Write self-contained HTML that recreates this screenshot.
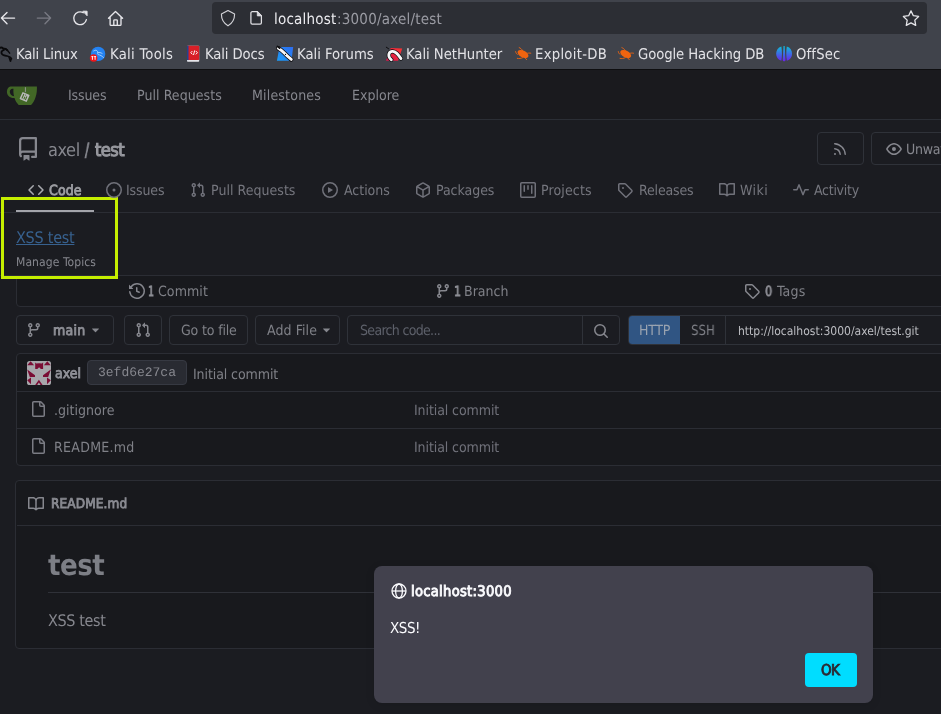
<!DOCTYPE html>
<html lang="en">
<head>
<meta charset="utf-8">
<title>axel/test - Gitea</title>
<style>
html,body{margin:0;padding:0;}
body{width:941px;height:714px;overflow:hidden;position:relative;background:#1b1c21;font-family:"DejaVu Sans Condensed","DejaVu Sans","Liberation Sans",sans-serif;font-stretch:condensed;}
.t{will-change:transform;text-rendering:geometricPrecision;font-weight:400;position:absolute;white-space:nowrap;margin:0;padding:0;line-height:normal;transform-origin:0 50%;display:block;text-decoration:none;}
.abs{position:absolute;}
svg{position:absolute;overflow:visible;}
#chrome{position:absolute;left:0;top:0;width:941px;height:69px;background:#40434b;}
#urlbar{position:absolute;left:212px;top:2px;width:715px;height:32px;border-radius:4px;background:#2c2e34;}
#nav{position:absolute;left:0;top:69px;width:941px;height:50px;background:#1a1a1e;border-bottom:1px solid #2b2e35;border-top:1px solid #0e0e10;box-sizing:border-box;height:51px;}
.btn{position:absolute;box-sizing:border-box;border:1px solid #2f3239;border-radius:4px;}
.line{position:absolute;background:#2b2d34;height:1px;}
.box{position:absolute;box-sizing:border-box;border:1px solid #2b2d34;background:#18191d;}
</style>
</head>
<body>
<!-- ======= Firefox chrome ======= -->
<div id="chrome">
  <div id="urlbar"></div>
  <!-- toolbar icons -->
  <svg id="tb-icons" style="left:0;top:0" width="941" height="37" viewBox="0 0 941 37" fill="none" stroke="#e6e6ea" stroke-width="1.35" stroke-linecap="round" stroke-linejoin="round">
    <path d="M14.6 18.1H2M7 12.5 1.4 18.1 7 23.7"/>
    <path d="M37.3 18.1h12.8M45 12.5l5.6 5.6-5.6 5.6" stroke="#787a83"/>
    <path d="M86.4 19.6a6.4 6.4 0 1 1-3.1-6.9"/>
    <path d="M83.2 11.2h3.9v4.2z" fill="#e6e6ea" stroke-width="0.9"/>
    <path d="M108.5 18.2 115.5 11.4 122.6 18.2M110.1 17v7.4a.9.9 0 0 0 .9.9h9.1a.9.9 0 0 0 .9-.9V17M113.8 25.2v-4.6a.8.8 0 0 1 .8-.8h1.9a.8.8 0 0 1 .8.8v4.6"/>
    <path d="M228 10.5l6.6 3.6c0 5.6-2.400 9.300-6.600 11.700-4.200-2.400-6.600-6.100-6.600-11.700z" stroke="#d2d2d7" stroke-width="1.15"/>
    <path d="M252.200 11.700h5.100l4.100 4.200v6.900a1.300 1.300 0 0 1-1.300 1.300h-7.900a1.300 1.300 0 0 1-1.300-1.300v-9.800a1.300 1.300 0 0 1 1.300-1.300z" stroke="#e0e0e4" stroke-width="1.25"/>
    <path d="M257.300 11.700v4.200h4.100z" fill="#d8d8dc" stroke="#e0e0e4" stroke-width="0.8"/>
    <path d="M911 10.900l2.350 4.770 5.260.76-3.800 3.710.9 5.240-4.710-2.470-4.710 2.470.9-5.240-3.800-3.710 5.260-.76z" stroke-width="1.3"/>
  </svg>


  <!-- bookmark favicons -->
  <svg id="favicons" style="left:0;top:37px" width="941" height="32" viewBox="0 37 941 32">
    <defs>
      <linearGradient id="og" x1="0" y1="0" x2="0" y2="1"><stop offset="0" stop-color="#10bcd6"/><stop offset="0.5" stop-color="#3b6ee6"/><stop offset="1" stop-color="#6a24ea"/></linearGradient>
    <linearGradient id="fg" x1="0" y1="1" x2="1" y2="0"><stop offset="0" stop-color="#1a9cf6"/><stop offset="1" stop-color="#2f6cf0"/></linearGradient><linearGradient id="ng" x1="0" y1="1" x2="1" y2="0"><stop offset="0" stop-color="#d4164e"/><stop offset="1" stop-color="#ff3330"/></linearGradient>
    </defs>
    <!-- Kali Linux dragon -->
    <g fill="none" stroke="#0a0a0c" stroke-linecap="round" stroke-linejoin="round">
      <path d="M0 47.700c1.400-.5 2.700-.2 3.200.9 1.600.1 3 .6 3.900 1.500" stroke-width="2"/>
      <path d="M6 48.800l3.700 4.400-2.300-3" stroke-width="1.300"/>
      <path d="M4 49.900c-2 .7-2.800 2.100-2.500 3.400.5 2.200 3.500 2.300 5.700 2.700 2.100.4 3.600 1.200 4.200 2.600" stroke-width="1.700"/>
      <path d="M9 57.300l1.300 4M11.300 58.500l-.6 2.500" stroke-width="1.300"/>
    </g>
    <!-- Kali Tools -->
    <circle cx="98.100" cy="53.900" r="7.200" fill="#2382f2"/>
    <path d="M93.700 50.900c1-.6 1.900-.8 2.700-.5 1 .4 1.300 1.400 1.400 2.300 1.500-.4 2.900-.1 4.300.7M97.800 52.700c-.3.900-.2 1.500.4 1.900 1.900.4 3.800 1.300 5.300 2.900" fill="none" stroke="#b9dafc" stroke-width="0.950" stroke-linecap="round" opacity="0.9"/>
    <circle cx="93.600" cy="58" r="3.800" fill="#f0161a"/>
    <path d="M91.400 56.600h2M92.400 56.600v3.200M94.100 56.600h2M95.100 56.600v3.200" stroke="#fff" stroke-width="0.950"/>
    <!-- Kali Docs -->
    <rect x="187" y="45.800" width="12.200" height="15.900" rx="0.800" fill="#e6e6ea"/>
    <rect x="187" y="45.800" width="12.200" height="14.300" rx="0.800" fill="#d81f27"/>
    <rect x="187" y="45.800" width="1.500" height="14.300" fill="#24408f"/>
    <path d="M192.400 51l-1.600 1.700 1.600 1.700M195.800 51l1.600 1.700-1.600 1.700M194.700 50.400l-1.200 4.600" fill="none" stroke="#fff" stroke-width="0.950"/>
    <!-- Kali Forums -->
    <path d="M279.500 46.900h13.700l-1.700 13.900h-14.600z" fill="url(#fg)"/>
    <path d="M278.300 48.200c2.200 1.200 4.200 2.900 6 4.800 1.900 2.100 4.300 4.300 7 6.400" fill="none" stroke="#0b0b0d" stroke-width="4.400" stroke-linecap="round"/>
    <path d="M278.300 48.200c2.200 1.200 4.200 2.900 6 4.800 1.900 2.100 4.300 4.300 7 6.400" fill="none" stroke="#f6f6f8" stroke-width="2.900" stroke-linecap="round"/>
    <path d="M277.400 46.300l2.200 1.900" stroke="#0b0b0d" stroke-width="1.600" stroke-linecap="round"/>
    <circle cx="285.500" cy="54.400" r="0.600" fill="#0b0b0d"/>
    <!-- Kali NetHunter -->
    <path d="M390.700 48l11.500.5-4.100 12.300h-12.100z" fill="url(#ng)"/>
    <path d="M386.300 47.200l2.300 1.600" stroke="#0b0b0d" stroke-width="1" stroke-linecap="round"/>
    <path d="M391.400 59.800c-3.600-2.600-3.600-7.700.6-8.400 3.600-.6 6.300 3.300 9 7.200" fill="none" stroke="#0b0b0d" stroke-width="4.200" stroke-linecap="round"/>
    <path d="M391.400 59.800c-3.600-2.600-3.600-7.700.6-8.400 3.600-.6 6.300 3.300 9 7.200" fill="none" stroke="#f6f6f8" stroke-width="2.800" stroke-linecap="round"/>
    <!-- Exploit-DB bug -->
    <g fill="#f0640f" stroke="#f0640f">
      <ellipse cx="523" cy="54.100" rx="5.900" ry="3.400" transform="rotate(28 523 54.100)" stroke="none"/>
      <path d="M519.200 47.600c1.400.6 2.600 1.600 3.400 3M526.500 53.500c1.600-.5 3-.6 4.300-.3M517.300 58.400c1.700.4 3.600.1 5.300-.7M515.600 51.600c.2 1.200.8 2.200 1.700 2.800M525 57.600c.5.900 1 1.600 1.600 2.100" fill="none" stroke-width="0.900" stroke-linecap="round"/>
    </g>
    <g transform="translate(102.7 0)" fill="#f0640f" stroke="#f0640f">
      <ellipse cx="523" cy="54.100" rx="5.900" ry="3.400" transform="rotate(28 523 54.100)" stroke="none"/>
      <path d="M519.200 47.600c1.400.6 2.600 1.600 3.400 3M526.500 53.500c1.600-.5 3-.6 4.300-.3M517.300 58.400c1.700.4 3.600.1 5.300-.7M515.600 51.600c.2 1.200.8 2.200 1.700 2.800M525 57.600c.5.900 1 1.600 1.600 2.100" fill="none" stroke-width="0.900" stroke-linecap="round"/>
    </g>
    <!-- OffSec -->
    <path d="M781.400 46.500c-7 2-7 12.300 0 14.300 .7-4.800 .7-9.500 0-14.300z" fill="url(#og)"/>
    <path d="M786.800 46.500c7 2 7 12.300 0 14.300-.7-4.800-.7-9.500 0-14.300z" fill="url(#og)"/>
    <path d="M783.500 46h1.200l.8 13.900c0 1.700-2.800 1.700-2.800 0z" fill="url(#og)"/>
  </svg>
</div>
<!-- ======= Gitea navbar ======= -->
<div id="nav">
  <svg id="logo" style="left:0;top:8.400px" width="50" height="34" viewBox="0 78 50 34">
    <path d="M10.400 86.600h26.500c.4 6.900-1.400 13.900-5.800 18.500h-12.400c-2.100-2.100-3.500-4.500-4.200-7-4.600.3-7.600-2.600-7.600-6.300 0-2.900 1.500-4.700 3.500-5.200zM11.900 88.700c-1.300.5-2.100 1.600-2.100 3.100 0 2.200 1.600 4.100 4.300 4.400-.7-2.800-.9-5.500-.6-7.500z" fill="#426726" fill-rule="evenodd"/>
    <path d="M25.400 87.200v5" stroke="#9b9c9c" stroke-width="0.900"/>
    <g transform="rotate(24 24.600 97)">
      <rect x="20.700" y="93.100" width="7.800" height="7.800" rx="0.700" fill="#b9b9ba"/>
      <path d="M22.700 94.600v4.800M24.800 96.600v2.800M26.500 95.500v3.900M24.800 94.500v.8" stroke="#436827" stroke-width="1.050"/>
    </g>
  </svg>
</div>

<!-- repo header buttons -->
<div class="btn" style="left:817px;top:132px;width:47px;height:33px;"></div>
<div class="btn" style="left:871px;top:132px;width:90px;height:33px;"></div>

<!-- tabs -->
<div class="line" style="left:0;top:212px;width:941px;"></div>
<div class="abs" style="left:16px;top:210px;width:78px;height:2px;background:#a3a4aa;"></div>

<!-- stats segment -->
<div class="box" style="left:16px;top:275px;width:960px;height:32px;border-radius:0 0 4px 4px;"></div>
<div class="line" style="left:0;top:275px;width:941px;"></div>

<!-- button row -->
<div class="btn" style="left:16px;top:315px;width:98px;height:30px;"></div>
<div class="btn" style="left:124px;top:315px;width:38px;height:30px;"></div>
<div class="btn" style="left:169px;top:315px;width:79px;height:30px;"></div>
<div class="btn" style="left:255px;top:315px;width:85px;height:30px;"></div>
<div class="btn" style="left:347px;top:315px;width:273px;height:30px;"></div>
<div class="abs" style="left:582px;top:316px;width:1px;height:28px;background:#2f3239;"></div>
<div class="btn" style="left:628px;top:315px;width:340px;height:30px;"></div>
<div class="abs" style="left:629px;top:316px;width:51px;height:28px;background:#305583;border-radius:3px 0 0 3px;"></div>
<div class="abs" style="left:725px;top:316px;width:1px;height:28px;background:#2f3239;"></div>

<!-- file table -->
<div class="box" style="left:16px;top:353px;width:960px;height:113px;border-radius:4px;"></div>
<div class="line" style="left:17px;top:391px;width:930px;"></div>
<div class="line" style="left:17px;top:428px;width:930px;"></div>
<svg id="avatar" style="left:27px;top:361px" width="24" height="24" viewBox="0 0 24 24">
  <rect width="24" height="24" rx="2.600" fill="#a7a7ab"/>
  <g fill="#7a0d34">
    <path d="M.2 4.300h6.900L3.600.3zM16.900 4.300h6.900L20.300.3z"/>
    <path d="M8.200 1.400l1.200 1.200 2.700-.4 2.800.4 1.200-1.200v6.700h-2.200l-1.800-1.900-1.800 1.900H8.200z"/>
    <path d="M.2 8.400l7.800 5.800v1.800H2.800zM23.800 8.400l-7.800 5.800v1.800h5.200z"/>
    <path d="M.2 19.300L4 16.600v6.700zM23.800 19.300L20 16.600v6.700z"/>
    <path d="M11.900 18.800l3.700 5.100h-2l-1.700-2.300-1.700 2.300h-2z"/>
  </g>
</svg>
<div class="abs" style="left:87px;top:360px;width:100px;height:25px;border-radius:4px;background:#292b32;border:1px solid #363942;box-sizing:border-box;"></div>

<!-- readme -->
<div class="box" style="left:15px;top:480px;width:961px;height:169px;border-radius:4px;"></div>
<div class="line" style="left:17px;top:525px;width:930px;"></div>
<div class="line" style="left:48px;top:592px;width:900px;background:#2f3138;"></div>

<!-- highlight -->
<div class="abs" style="left:1px;top:197px;width:117px;height:82px;box-sizing:border-box;border:3px solid #c5ee00;"></div>

<!-- alert dialog -->
<div class="abs" style="left:374px;top:566px;width:499px;height:137px;border-radius:8px;background:#42414d;box-shadow:0 2px 10px rgba(0,0,0,.1);"></div>
<div class="abs" style="left:805px;top:653px;width:52px;height:34px;border-radius:4px;background:#00ddff;"></div>

<svg id="globe" style="left:390.700px;top:582.800px" width="16" height="16" viewBox="0 0 16 16" fill="none" stroke="#fbfbfe" stroke-width="1.300">
  <circle cx="8" cy="8" r="7"/><ellipse cx="8" cy="8" rx="3.400" ry="7"/><path d="M1 8h14"/>
</svg>
<svg class="oct" style="left:16.4px;top:137px" width="24" height="24" viewBox="0 0 16 16" fill="#86878e"><path d="M2 2.5A2.5 2.5 0 0 1 4.5 0h8.75a.75.75 0 0 1 .75.75v12.5a.75.75 0 0 1-.75.75h-2.5a.75.75 0 0 1 0-1.5h1.75v-2h-8a1 1 0 0 0-.714 1.7.75.75 0 1 1-1.072 1.05A2.495 2.495 0 0 1 2 11.5Zm10.500-1h-8a1 1 0 0 0-1 1v6.708A2.486 2.486 0 0 1 4.500 9h8ZM5 12.250a.25.25 0 0 1 .25-.25h3.500a.25.25 0 0 1 .25.25v3.250a.25.25 0 0 1-.4.2l-1.450-1.087a.249.249 0 0 0-.3 0L5.400 15.700a.25.25 0 0 1-.4-.2Z"/></svg>
<svg class="oct" style="left:831.7px;top:141px" width="16" height="16" viewBox="0 0 16 16" fill="#86878e"><path d="M2.002 2.725a.75.75 0 0 1 .797-.699C8.790 2.420 13.580 7.210 13.974 13.201a.75.75 0 0 1-1.497.098 10.502 10.502 0 0 0-9.776-9.776.747.747 0 0 1-.7-.798ZM2.840 7.050h-.002a7.002 7.002 0 0 1 6.113 6.111.75.75 0 0 1-1.490.178 5.503 5.503 0 0 0-4.800-4.800.75.75 0 0 1 .179-1.489ZM2 13a1 1 0 1 1 2 0 1 1 0 0 1-2 0Z"/></svg>
<svg class="oct" style="left:886px;top:141.3px" width="16" height="16" viewBox="0 0 16 16" fill="#86878e"><path d="M8 2c1.981 0 3.671.992 4.933 2.078 1.270 1.091 2.187 2.345 2.637 3.023a1.620 1.620 0 0 1 0 1.798c-.45.678-1.367 1.932-2.637 3.023C11.670 13.008 9.981 14 8 14c-1.981 0-3.671-.992-4.933-2.078C1.797 10.830.880 9.576.430 8.898a1.620 1.620 0 0 1 0-1.798c.45-.677 1.367-1.931 2.637-3.022C4.330 2.992 6.019 2 8 2ZM1.679 7.932a.12.12 0 0 0 0 .136c.411.622 1.241 1.750 2.366 2.717C5.176 11.758 6.527 12.500 8 12.500c1.473 0 2.825-.742 3.955-1.715 1.124-.967 1.954-2.096 2.366-2.717a.12.12 0 0 0 0-.136c-.412-.621-1.242-1.750-2.366-2.717C10.824 4.242 9.473 3.500 8 3.500c-1.473 0-2.825.742-3.955 1.715-1.124.967-1.954 2.096-2.366 2.717ZM8 10a2 2 0 1 1-.001-3.999A2 2 0 0 1 8 10Z"/></svg>
<svg class="oct" style="left:28px;top:182.4px" width="16" height="16" viewBox="0 0 16 16" fill="#a8a9ae"><path d="m11.28 3.22 4.25 4.25a.75.75 0 0 1 0 1.06l-4.25 4.25a.749.749 0 0 1-1.275-.326.749.749 0 0 1 .215-.734L13.94 8l-3.72-3.72a.749.749 0 0 1 .326-1.275.749.749 0 0 1 .734.215Zm-6.56 0a.751.751 0 0 1 1.042.018.751.751 0 0 1 .018 1.042L2.06 8l3.72 3.72a.749.749 0 0 1-.326 1.275.749.749 0 0 1-.734-.215L.47 8.53a.75.75 0 0 1 0-1.06Z"/></svg>
<svg class="oct" style="left:106px;top:182.3px" width="16" height="16" viewBox="0 0 16 16" fill="#70717a"><path d="M8 9.5a1.5 1.5 0 1 0 0-3 1.5 1.5 0 0 0 0 3Z M8 0a8 8 0 1 1 0 16A8 8 0 0 1 8 0ZM1.5 8a6.5 6.5 0 1 0 13 0 6.5 6.5 0 0 0-13 0Z"/></svg>
<svg class="oct" style="left:189.5px;top:182.3px" width="16" height="16" viewBox="0 0 16 16" fill="#70717a"><path d="M1.5 3.25a2.25 2.25 0 1 1 3 2.122v5.256a2.251 2.251 0 1 1-1.5 0V5.372A2.25 2.25 0 0 1 1.5 3.25Zm5.677-.177L9.573.677A.25.25 0 0 1 10 .854V2.5h1A2.5 2.5 0 0 1 13.5 5v5.628a2.251 2.251 0 1 1-1.5 0V5a1 1 0 0 0-1-1h-1v1.646a.25.25 0 0 1-.427.177L7.177 3.427a.25.25 0 0 1 0-.354ZM3.75 2.5a.75.75 0 1 0 0 1.5.75.75 0 0 0 0-1.5Zm0 9.5a.75.75 0 1 0 0 1.5.75.75 0 0 0 0-1.5Zm8.25.75a.75.75 0 1 0 1.5 0 .75.75 0 0 0-1.5 0Z"/></svg>
<svg class="oct" style="left:322px;top:182.3px" width="16" height="16" viewBox="0 0 16 16" fill="#70717a"><path d="M8 0a8 8 0 1 1 0 16A8 8 0 0 1 8 0ZM1.5 8a6.5 6.5 0 1 0 13 0 6.5 6.5 0 0 0-13 0Zm4.879-2.773 4.264 2.559a.25.25 0 0 1 0 .428l-4.264 2.559A.25.25 0 0 1 6 10.559V5.442a.25.25 0 0 1 .379-.215Z"/></svg>
<svg class="oct" style="left:414.75px;top:182.3px" width="16" height="16" viewBox="0 0 16 16" fill="#70717a"><path d="m8.878.392 5.25 3.045c.54.314.872.89.872 1.514v6.098a1.75 1.75 0 0 1-.872 1.514l-5.25 3.045a1.75 1.75 0 0 1-1.756 0l-5.25-3.045A1.75 1.75 0 0 1 1 11.049V4.951c0-.624.332-1.201.872-1.514L7.122.392a1.75 1.75 0 0 1 1.756 0ZM7.875 1.69l-4.63 2.685L8 7.133l4.755-2.758-4.63-2.685a.248.248 0 0 0-.25 0ZM2.5 5.677v5.372c0 .09.047.171.125.216l4.625 2.683V8.432Zm6.25 8.271 4.625-2.683a.25.25 0 0 0 .125-.216V5.677L8.75 8.432Z"/></svg>
<svg class="oct" style="left:520px;top:182.3px" width="16" height="16" viewBox="0 0 16 16" fill="#70717a"><path d="M1.75 0h12.5C15.216 0 16 .784 16 1.75v12.5A1.75 1.75 0 0 1 14.25 16H1.75A1.75 1.75 0 0 1 0 14.25V1.75C0 .784.784 0 1.75 0ZM1.5 1.75v12.5c0 .138.112.25.25.25h12.5a.25.25 0 0 0 .25-.25V1.75a.25.25 0 0 0-.25-.25H1.75a.25.25 0 0 0-.25.25ZM11.75 3a.75.75 0 0 1 .75.75v7.5a.75.75 0 0 1-1.5 0v-7.5a.75.75 0 0 1 .75-.75Zm-8.25.75a.75.75 0 0 1 1.5 0v5.5a.75.75 0 0 1-1.5 0ZM8 3a.75.75 0 0 1 .75.75v3.5a.75.75 0 0 1-1.5 0v-3.5A.75.75 0 0 1 8 3Z"/></svg>
<svg class="oct" style="left:617px;top:182.3px" width="16" height="16" viewBox="0 0 16 16" fill="#70717a"><path d="M1 7.775V2.75C1 1.784 1.784 1 2.75 1h5.025c.464 0 .91.184 1.238.513l6.25 6.25a1.75 1.75 0 0 1 0 2.474l-5.026 5.026a1.75 1.75 0 0 1-2.474 0l-6.25-6.25A1.752 1.752 0 0 1 1 7.775Zm1.5 0c0 .066.026.13.073.177l6.25 6.25a.25.25 0 0 0 .354 0l5.025-5.025a.25.25 0 0 0 0-.354l-6.25-6.25a.25.25 0 0 0-.177-.073H2.75a.25.25 0 0 0-.25.25ZM6 5a1 1 0 1 1 0 2 1 1 0 0 1 0-2Z"/></svg>
<svg class="oct" style="left:718.8px;top:182.3px" width="16" height="16" viewBox="0 0 16 16" fill="#70717a"><path d="M0 1.75A.75.75 0 0 1 .75 1h4.253c1.227 0 2.317.59 3 1.501A3.743 3.743 0 0 1 11.006 1h4.245a.75.75 0 0 1 .75.75v10.5a.75.75 0 0 1-.75.75h-4.507a2.25 2.25 0 0 0-1.591.659l-.622.621a.75.75 0 0 1-1.06 0l-.622-.621A2.25 2.25 0 0 0 5.258 13H.75a.75.75 0 0 1-.75-.75Zm7.251 10.324.004-5.073-.002-2.253A2.25 2.25 0 0 0 5.003 2.5H1.5v9h3.757a3.75 3.75 0 0 1 1.994.574ZM8.755 4.75l-.004 7.322a3.752 3.752 0 0 1 1.992-.572H14.5v-9h-3.495a2.25 2.25 0 0 0-2.25 2.25Z"/></svg>
<svg class="oct" style="left:792.8px;top:182.3px" width="16" height="16" viewBox="0 0 16 16" fill="#70717a"><path d="M6 2c.306 0 .582.187.696.471L10 10.731l1.304-3.26A.751.751 0 0 1 12 7h3.25a.75.75 0 0 1 0 1.5h-2.742l-1.812 4.528a.751.751 0 0 1-1.392 0L6 4.77 4.696 8.03A.75.75 0 0 1 4 8.5H.75a.75.75 0 0 1 0-1.5h2.742l1.812-4.529A.751.751 0 0 1 6 2Z"/></svg>
<svg class="oct" style="left:129px;top:283.2px" width="16" height="16" viewBox="0 0 16 16" fill="#86878e"><path d="m.427 1.927 1.215 1.215a8.002 8.002 0 1 1-1.600 5.685.75.75 0 1 1 1.493-.154 6.500 6.500 0 1 0 1.180-4.458l1.358 1.358A.25.25 0 0 1 3.896 6H.25A.25.25 0 0 1 0 5.750V2.104a.25.25 0 0 1 .427-.177ZM7.750 4a.75.75 0 0 1 .75.75v2.992l2.028.812a.75.75 0 0 1-.557 1.392l-2.500-1A.751.751 0 0 1 7 8.250v-3.500A.75.75 0 0 1 7.750 4Z"/></svg>
<svg class="oct" style="left:435px;top:283.2px" width="16" height="16" viewBox="0 0 16 16" fill="#86878e"><path d="M9.500 3.250a2.250 2.250 0 1 1 3 2.122V6A2.500 2.500 0 0 1 10 8.500H6a1 1 0 0 0-1 1v1.128a2.251 2.251 0 1 1-1.500 0V5.372a2.250 2.250 0 1 1 1.500 0v1.836A2.493 2.493 0 0 1 6 7h4a1 1 0 0 0 1-1v-.628A2.250 2.250 0 0 1 9.500 3.250Zm-6 0a.75.75 0 1 0 1.500 0 .75.75 0 0 0-1.500 0Zm8.250-.75a.75.75 0 1 0 0 1.500.75.75 0 0 0 0-1.500ZM4.250 12a.75.75 0 1 0 0 1.500.75.75 0 0 0 0-1.500Z"/></svg>
<svg class="oct" style="left:743.6px;top:283.2px" width="16" height="16" viewBox="0 0 16 16" fill="#86878e"><path d="M1 7.775V2.75C1 1.784 1.784 1 2.75 1h5.025c.464 0 .91.184 1.238.513l6.25 6.25a1.75 1.75 0 0 1 0 2.474l-5.026 5.026a1.75 1.75 0 0 1-2.474 0l-6.25-6.25A1.752 1.752 0 0 1 1 7.775Zm1.5 0c0 .066.026.13.073.177l6.25 6.25a.25.25 0 0 0 .354 0l5.025-5.025a.25.25 0 0 0 0-.354l-6.25-6.25a.25.25 0 0 0-.177-.073H2.75a.25.25 0 0 0-.25.25ZM6 5a1 1 0 1 1 0 2 1 1 0 0 1 0-2Z"/></svg>
<svg class="oct" style="left:26px;top:322px" width="16" height="16" viewBox="0 0 16 16" fill="#86878e"><path d="M9.500 3.250a2.250 2.250 0 1 1 3 2.122V6A2.500 2.500 0 0 1 10 8.500H6a1 1 0 0 0-1 1v1.128a2.251 2.251 0 1 1-1.500 0V5.372a2.250 2.250 0 1 1 1.500 0v1.836A2.493 2.493 0 0 1 6 7h4a1 1 0 0 0 1-1v-.628A2.250 2.250 0 0 1 9.500 3.250Zm-6 0a.75.75 0 1 0 1.500 0 .75.75 0 0 0-1.500 0Zm8.250-.75a.75.75 0 1 0 0 1.500.75.75 0 0 0 0-1.500ZM4.250 12a.75.75 0 1 0 0 1.500.75.75 0 0 0 0-1.500Z"/></svg>
<svg class="oct" style="left:88.4px;top:322.2px" width="15" height="15" viewBox="0 0 16 16" fill="#86878e"><path d="m4.427 7.427 3.396 3.396a.25.25 0 0 0 .354 0l3.396-3.396A.25.25 0 0 0 11.396 7H4.604a.25.25 0 0 0-.177.427Z"/></svg>
<svg class="oct" style="left:134.5px;top:322px" width="16" height="16" viewBox="0 0 16 16" fill="#86878e"><path d="M1.5 3.25a2.25 2.25 0 1 1 3 2.122v5.256a2.251 2.251 0 1 1-1.5 0V5.372A2.25 2.25 0 0 1 1.5 3.25Zm5.677-.177L9.573.677A.25.25 0 0 1 10 .854V2.5h1A2.5 2.5 0 0 1 13.5 5v5.628a2.251 2.251 0 1 1-1.5 0V5a1 1 0 0 0-1-1h-1v1.646a.25.25 0 0 1-.427.177L7.177 3.427a.25.25 0 0 1 0-.354ZM3.75 2.5a.75.75 0 1 0 0 1.5.75.75 0 0 0 0-1.5Zm0 9.5a.75.75 0 1 0 0 1.5.75.75 0 0 0 0-1.5Zm8.25.75a.75.75 0 1 0 1.5 0 .75.75 0 0 0-1.5 0Z"/></svg>
<svg class="oct" style="left:318.9px;top:322.2px" width="15" height="15" viewBox="0 0 16 16" fill="#86878e"><path d="m4.427 7.427 3.396 3.396a.25.25 0 0 0 .354 0l3.396-3.396A.25.25 0 0 0 11.396 7H4.604a.25.25 0 0 0-.177.427Z"/></svg>
<svg class="oct" style="left:593.25px;top:322.5px" width="16" height="16" viewBox="0 0 16 16" fill="#86878e"><path d="M10.680 11.740a6 6 0 0 1-7.922-8.982 6 6 0 0 1 8.982 7.922l3.040 3.040a.749.749 0 0 1-.326 1.275.749.749 0 0 1-.734-.215ZM11.500 7a4.499 4.499 0 1 0-8.997 0A4.499 4.499 0 0 0 11.500 7Z"/></svg>
<svg class="oct" style="left:30px;top:401px" width="16" height="16" viewBox="0 0 16 16" fill="#7b7c84"><path d="M2 1.750C2 .784 2.784 0 3.750 0h6.586c.464 0 .909.184 1.237.513l2.914 2.914c.329.328.513.773.513 1.237v9.586A1.750 1.750 0 0 1 13.250 16h-9.500A1.750 1.750 0 0 1 2 14.250Zm1.750-.25a.25.25 0 0 0-.25.25v12.500c0 .138.112.25.25.25h9.500a.25.25 0 0 0 .25-.25V6h-2.750A1.750 1.750 0 0 1 9 4.250V1.500Zm6.750.062V4.250c0 .138.112.25.25.25h2.688l-.011-.013-2.914-2.914-.013-.011Z"/></svg>
<svg class="oct" style="left:30px;top:438px" width="16" height="16" viewBox="0 0 16 16" fill="#7b7c84"><path d="M2 1.750C2 .784 2.784 0 3.750 0h6.586c.464 0 .909.184 1.237.513l2.914 2.914c.329.328.513.773.513 1.237v9.586A1.750 1.750 0 0 1 13.250 16h-9.500A1.750 1.750 0 0 1 2 14.250Zm1.750-.25a.25.25 0 0 0-.25.25v12.500c0 .138.112.25.25.25h9.500a.25.25 0 0 0 .25-.25V6h-2.750A1.750 1.750 0 0 1 9 4.250V1.500Zm6.750.062V4.250c0 .138.112.25.25.25h2.688l-.011-.013-2.914-2.914-.013-.011Z"/></svg>
<svg class="oct" style="left:28px;top:495.5px" width="16" height="16" viewBox="0 0 16 16" fill="#86878e"><path d="M0 1.75A.75.75 0 0 1 .75 1h4.253c1.227 0 2.317.59 3 1.501A3.743 3.743 0 0 1 11.006 1h4.245a.75.75 0 0 1 .75.75v10.5a.75.75 0 0 1-.75.75h-4.507a2.25 2.25 0 0 0-1.591.659l-.622.621a.75.75 0 0 1-1.06 0l-.622-.621A2.25 2.25 0 0 0 5.258 13H.75a.75.75 0 0 1-.75-.75Zm7.251 10.324.004-5.073-.002-2.253A2.25 2.25 0 0 0 5.003 2.5H1.5v9h3.757a3.75 3.75 0 0 1 1.994.574ZM8.755 4.75l-.004 7.322a3.752 3.752 0 0 1 1.992-.572H14.5v-9h-3.495a2.25 2.25 0 0 0-2.25 2.25Z"/></svg>
<span class="t" id="t0" style="left:273.9px;top:10.25px;font-size:15px;color:#ececf0;letter-spacing:0.229px;">localhost</span>
<span class="t" id="t1" style="left:336.8px;top:10.25px;font-size:15px;color:#9a9ba3;letter-spacing:0.214px;">:3000/axel/test</span>
<span class="t" id="t2" style="left:15.5px;top:46.25px;font-size:14.7px;color:#e2e2e6;letter-spacing:-0.203px;">Kali Linux</span>
<span class="t" id="t3" style="left:109.5px;top:46.25px;font-size:14.7px;color:#e2e2e6;letter-spacing:0.284px;">Kali Tools</span>
<span class="t" id="t4" style="left:204.5px;top:46.25px;font-size:14.7px;color:#e2e2e6;letter-spacing:-0.102px;">Kali Docs</span>
<span class="t" id="t5" style="left:296.5px;top:46.25px;font-size:14.7px;color:#e2e2e6;letter-spacing:-0.013px;">Kali Forums</span>
<span class="t" id="t6" style="left:405.75px;top:46.25px;font-size:14.7px;color:#e2e2e6;letter-spacing:-0.037px;">Kali NetHunter</span>
<span class="t" id="t7" style="left:534.87px;top:46.25px;font-size:14.7px;color:#e2e2e6;letter-spacing:0.284px;">Exploit-DB</span>
<span class="t" id="t8" style="left:638.08px;top:46.25px;font-size:14.7px;color:#e2e2e6;letter-spacing:-0.082px;">Google Hacking DB</span>
<span class="t" id="t9" style="left:796.08px;top:46.25px;font-size:14.7px;color:#e2e2e6;letter-spacing:0.151px;">OffSec</span>
<span class="t" id="t10" style="left:67.84px;top:88px;font-size:14px;color:#86878e;letter-spacing:-0.116px;">Issues</span>
<span class="t" id="t11" style="left:137.26px;top:88px;font-size:14px;color:#86878e;letter-spacing:0.067px;">Pull Requests</span>
<span class="t" id="t12" style="left:252.25px;top:88px;font-size:14px;color:#86878e;letter-spacing:0.188px;">Milestones</span>
<span class="t" id="t13" style="left:352.02px;top:88px;font-size:14px;color:#86878e;letter-spacing:0.004px;">Explore</span>
<span class="t" id="t14" style="left:48.2px;top:139.8px;font-size:18px;color:#86878e;letter-spacing:-0.424px;">axel</span>
<span class="t" id="t15" style="left:85.24px;top:139.8px;font-size:18px;color:#86878e;-webkit-text-stroke:1.04px #86878e;transform:scaleX(0.7381);">/</span>
<span class="t" id="t16" style="left:94.79px;top:139.8px;font-size:18px;color:#97989e;-webkit-text-stroke:1.04px #97989e;letter-spacing:-0.507px;">test</span>
<span class="t" id="t17" style="left:905.87px;top:142.3px;font-size:14px;color:#86878e;letter-spacing:-0.231px;">Unwatch</span>
<span class="t" id="t18" style="left:48.7px;top:183px;font-size:14px;color:#9d9ea3;-webkit-text-stroke:0.81px #9d9ea3;letter-spacing:0.1px;">Code</span>
<span class="t" id="t19" style="left:126.26px;top:183px;font-size:14px;color:#75767e;letter-spacing:-0.116px;">Issues</span>
<span class="t" id="t20" style="left:210.84px;top:183px;font-size:14px;color:#75767e;letter-spacing:0.034px;">Pull Requests</span>
<span class="t" id="t21" style="left:343.81px;top:183px;font-size:14px;color:#75767e;letter-spacing:-0.026px;">Actions</span>
<span class="t" id="t22" style="left:435.87px;top:183px;font-size:14px;color:#75767e;letter-spacing:-0.036px;">Packages</span>
<span class="t" id="t23" style="left:540.84px;top:183px;font-size:14px;color:#75767e;letter-spacing:0.138px;">Projects</span>
<span class="t" id="t24" style="left:638.61px;top:183px;font-size:14px;color:#75767e;letter-spacing:-0.154px;">Releases</span>
<span class="t" id="t25" style="left:740.01px;top:183px;font-size:14px;color:#75767e;letter-spacing:0.401px;">Wiki</span>
<span class="t" id="t26" style="left:814.24px;top:183px;font-size:14px;color:#75767e;letter-spacing:-0.281px;">Activity</span>
<a class="t" id="t27" style="left:15.7px;top:227.5px;font-size:16px;color:#37618f;letter-spacing:-0.244px;text-decoration:underline;text-underline-offset:1px;">XSS test</a>
<span class="t" id="t28" style="left:15.65px;top:255px;font-size:12px;color:#86878e;letter-spacing:0.089px;">Manage Topics</span>
<span class="t" id="t29" style="left:148.3px;top:284.25px;font-size:14px;color:#8e8f96;-webkit-text-stroke:0.81px #8e8f96;transform:scaleX(0.7627);">1</span>
<span class="t" id="t30" style="left:158.33px;top:284.25px;font-size:14px;color:#7f8087;letter-spacing:0.072px;">Commit</span>
<span class="t" id="t31" style="left:454.35px;top:284.25px;font-size:14px;color:#8e8f96;-webkit-text-stroke:0.81px #8e8f96;transform:scaleX(0.8866);">1</span>
<span class="t" id="t32" style="left:464.26px;top:284.25px;font-size:14px;color:#7f8087;letter-spacing:0.007px;">Branch</span>
<span class="t" id="t33" style="left:764.72px;top:284.25px;font-size:14px;color:#8e8f96;-webkit-text-stroke:0.81px #8e8f96;transform:scaleX(0.9032);">0</span>
<span class="t" id="t34" style="left:777.04px;top:284.25px;font-size:14px;color:#7f8087;letter-spacing:0.204px;">Tags</span>
<span class="t" id="t35" style="left:52.98px;top:323px;font-size:14px;color:#8e8f96;-webkit-text-stroke:0.81px #8e8f96;letter-spacing:0.253px;">main</span>
<span class="t" id="t36" style="left:180.72px;top:323px;font-size:14px;color:#7f8087;letter-spacing:-0.157px;">Go to file</span>
<span class="t" id="t37" style="left:266.67px;top:323px;font-size:14px;color:#7f8087;letter-spacing:0.079px;">Add File</span>
<span class="t" id="t38" style="left:360.08px;top:323px;font-size:14px;color:#5d606a;letter-spacing:-0.682px;">Search code...</span>
<span class="t" id="t39" style="left:638.69px;top:323px;font-size:14px;color:#99a3b0;letter-spacing:-0.275px;">HTTP</span>
<span class="t" id="t40" style="left:691.12px;top:323px;font-size:14px;color:#7f8087;transform:scaleX(0.9332);">SSH</span>
<span class="t" id="t41" style="left:738.4px;top:323.75px;font-size:12px;color:#bcbdc2;letter-spacing:0.012px;">http://localhost:3000/axel/test.git</span>
<span class="t" id="t42" style="left:55.0px;top:366px;font-size:14px;color:#909198;-webkit-text-stroke:0.81px #909198;letter-spacing:0.003px;">axel</span>
<span class="t" id="t43" style="left:98.35px;top:364.8px;font-size:13px;color:#86878e;font-family:'Liberation Mono','DejaVu Sans Mono',monospace;letter-spacing:-0.007px;">3efd6e27ca</span>
<span class="t" id="t44" style="left:192.61px;top:367px;font-size:14px;color:#7f8087;letter-spacing:-0.091px;">Initial commit</span>
<span class="t" id="t45" style="left:53.62px;top:403.25px;font-size:14px;color:#7f8087;letter-spacing:0.02px;">.gitignore</span>
<span class="t" id="t46" style="left:413.61px;top:403.25px;font-size:14px;color:#70717a;letter-spacing:-0.091px;">Initial commit</span>
<span class="t" id="t47" style="left:53.61px;top:440.25px;font-size:14px;color:#7f8087;letter-spacing:0.278px;">README.md</span>
<span class="t" id="t48" style="left:413.61px;top:440.25px;font-size:14px;color:#70717a;letter-spacing:-0.091px;">Initial commit</span>
<span class="t" id="t49" style="left:51.38px;top:496px;font-size:13.5px;color:#8a8b92;-webkit-text-stroke:0.78px #8a8b92;letter-spacing:0.112px;">README.md</span>
<h1 class="t" id="t50" style="left:48.25px;top:547.5px;font-size:29px;color:#7d7f86;font-weight:700;letter-spacing:-0.486px;">test</h1>
<p class="t" id="t51" style="left:48.14px;top:611px;font-size:16px;color:#86878e;letter-spacing:-0.353px;">XSS test</p>
<span class="t" id="t52" style="left:410.58px;top:583px;font-size:14.6px;color:#fbfbfe;-webkit-text-stroke:0.85px #fbfbfe;letter-spacing:0.288px;">localhost:3000</span>
<span class="t" id="t53" style="left:389.94px;top:619px;font-size:15px;color:#fbfbfe;letter-spacing:-0.455px;">XSS!</span>
<span class="t" id="t54" style="left:820.9px;top:661.2px;font-size:15px;color:#2b2a33;-webkit-text-stroke:0.87px #2b2a33;letter-spacing:-0.52px;">OK</span>
</body>
</html>
